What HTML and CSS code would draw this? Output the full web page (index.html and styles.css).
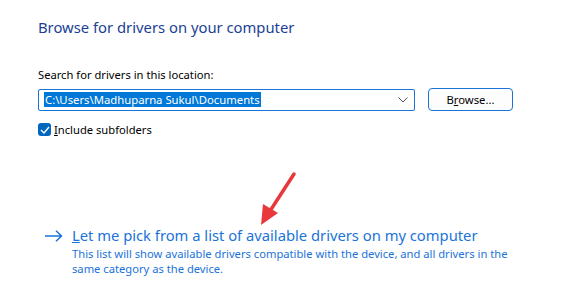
FILE: index.html
```
<!DOCTYPE html>
<html lang="en">
<head>
    <meta charset="UTF-8">
    <title>Browse for drivers on your computer</title>
    <link rel="stylesheet" href="styles.css">
</head>
<body>
    <h1 class="title">Browse for drivers on your computer</h1>

    <label class="field-label" for="location">Search for drivers in this location:</label>
    <div class="location-row">
        <div class="combo" id="location">
            <span class="combo-text">C:\Users\Madhuparna Sukul\Documents</span>
            <svg class="combo-chevron" width="10" height="6" viewBox="0 0 10 6">
                <path d="M0.5 0.5 L5 5 L9.5 0.5" fill="none" stroke="#555" stroke-width="1"/>
            </svg>
        </div>
        <button class="browse-btn">B<u>r</u>owse...</button>
    </div>

    <div class="check-row">
        <span class="checkbox">
            <svg width="10" height="8" viewBox="0 0 10 8">
                <path d="M1 4 L4 7 L9 1" fill="none" stroke="#fff" stroke-width="1.4"/>
            </svg>
        </span>
        <span><u>I</u>nclude subfolders</span>
    </div>

    <div class="pick-link">
        <svg class="pick-arrow" width="18" height="12" viewBox="0 0 18 12">
            <path d="M0 6 H16.5 M11 0.8 L16.5 6 L11 11.2" fill="none" stroke="#1a73d9" stroke-width="1.5"/>
        </svg>
        <div class="pick-body">
            <div class="pick-title"><u>L</u>et me pick from a list of available drivers on my computer</div>
            <div class="pick-desc">This list will show available drivers compatible with the device, and all drivers in the same category as the device.</div>
        </div>
        <svg class="annotation" width="40" height="56" viewBox="0 0 40 56">
            <path d="M36 3 L12 40" stroke="#e8383b" stroke-width="3.5" stroke-linecap="round"/>
            <path d="M3 54 L5 33 L20 42 Z" fill="#e8383b"/>
        </svg>
    </div>
</body>
</html>
```

FILE: styles.css
```
body {
    margin: 0;
    padding: 17px 38px 0 38px;
    font-family: "Noto Sans", "Open Sans", sans-serif;
    background: #fff;
    color: #000;
}
.title {
    font-size: 14.8px;
    font-weight: normal;
    color: #1b3f95;
    margin: 0 0 30px 0;
    line-height: 20px;
}
.field-label {
    display: block;
    font-size: 11.2px;
    line-height: 16px;
    margin-bottom: 5px;
}
.location-row {
    display: flex;
    align-items: center;
    gap: 13px;
}
.combo {
    width: 377px;
    height: 22px;
    box-sizing: border-box;
    border: 1px solid #1a73d9;
    border-radius: 2px;
    display: flex;
    align-items: center;
    justify-content: space-between;
    padding: 0 6px 0 5px;
}
.combo-text {
    background: #0078d7;
    color: #fff;
    font-size: 11.3px;
    line-height: 15px;
    padding: 0 1px;
}
.browse-btn {
    width: 85px;
    height: 23px;
    border: 1px solid #1a73d9;
    border-radius: 4px;
    background: #fdfdfd;
    font-family: inherit;
    font-size: 11.3px;
    color: #000;
    padding: 0;
}
.check-row {
    display: flex;
    align-items: center;
    gap: 3px;
    margin-top: 11px;
    font-size: 11.2px;
}
.checkbox {
    width: 13px;
    height: 13px;
    border-radius: 3px;
    background: #0067c0;
    display: flex;
    align-items: center;
    justify-content: center;
}
.pick-link {
    position: relative;
    display: flex;
    align-items: flex-start;
    gap: 9px;
    margin-top: 88px;
    padding-left: 7px;
    color: #1a73d9;
}
.pick-arrow {
    margin-top: 5px;
}
.pick-title {
    font-size: 14.75px;
    line-height: 20px;
}
.pick-desc {
    font-size: 11.2px;
    line-height: 15px;
    margin-top: 1px;
    width: 445px;
}
.annotation {
    position: absolute;
    left: 220px;
    top: -54px;
}
```
